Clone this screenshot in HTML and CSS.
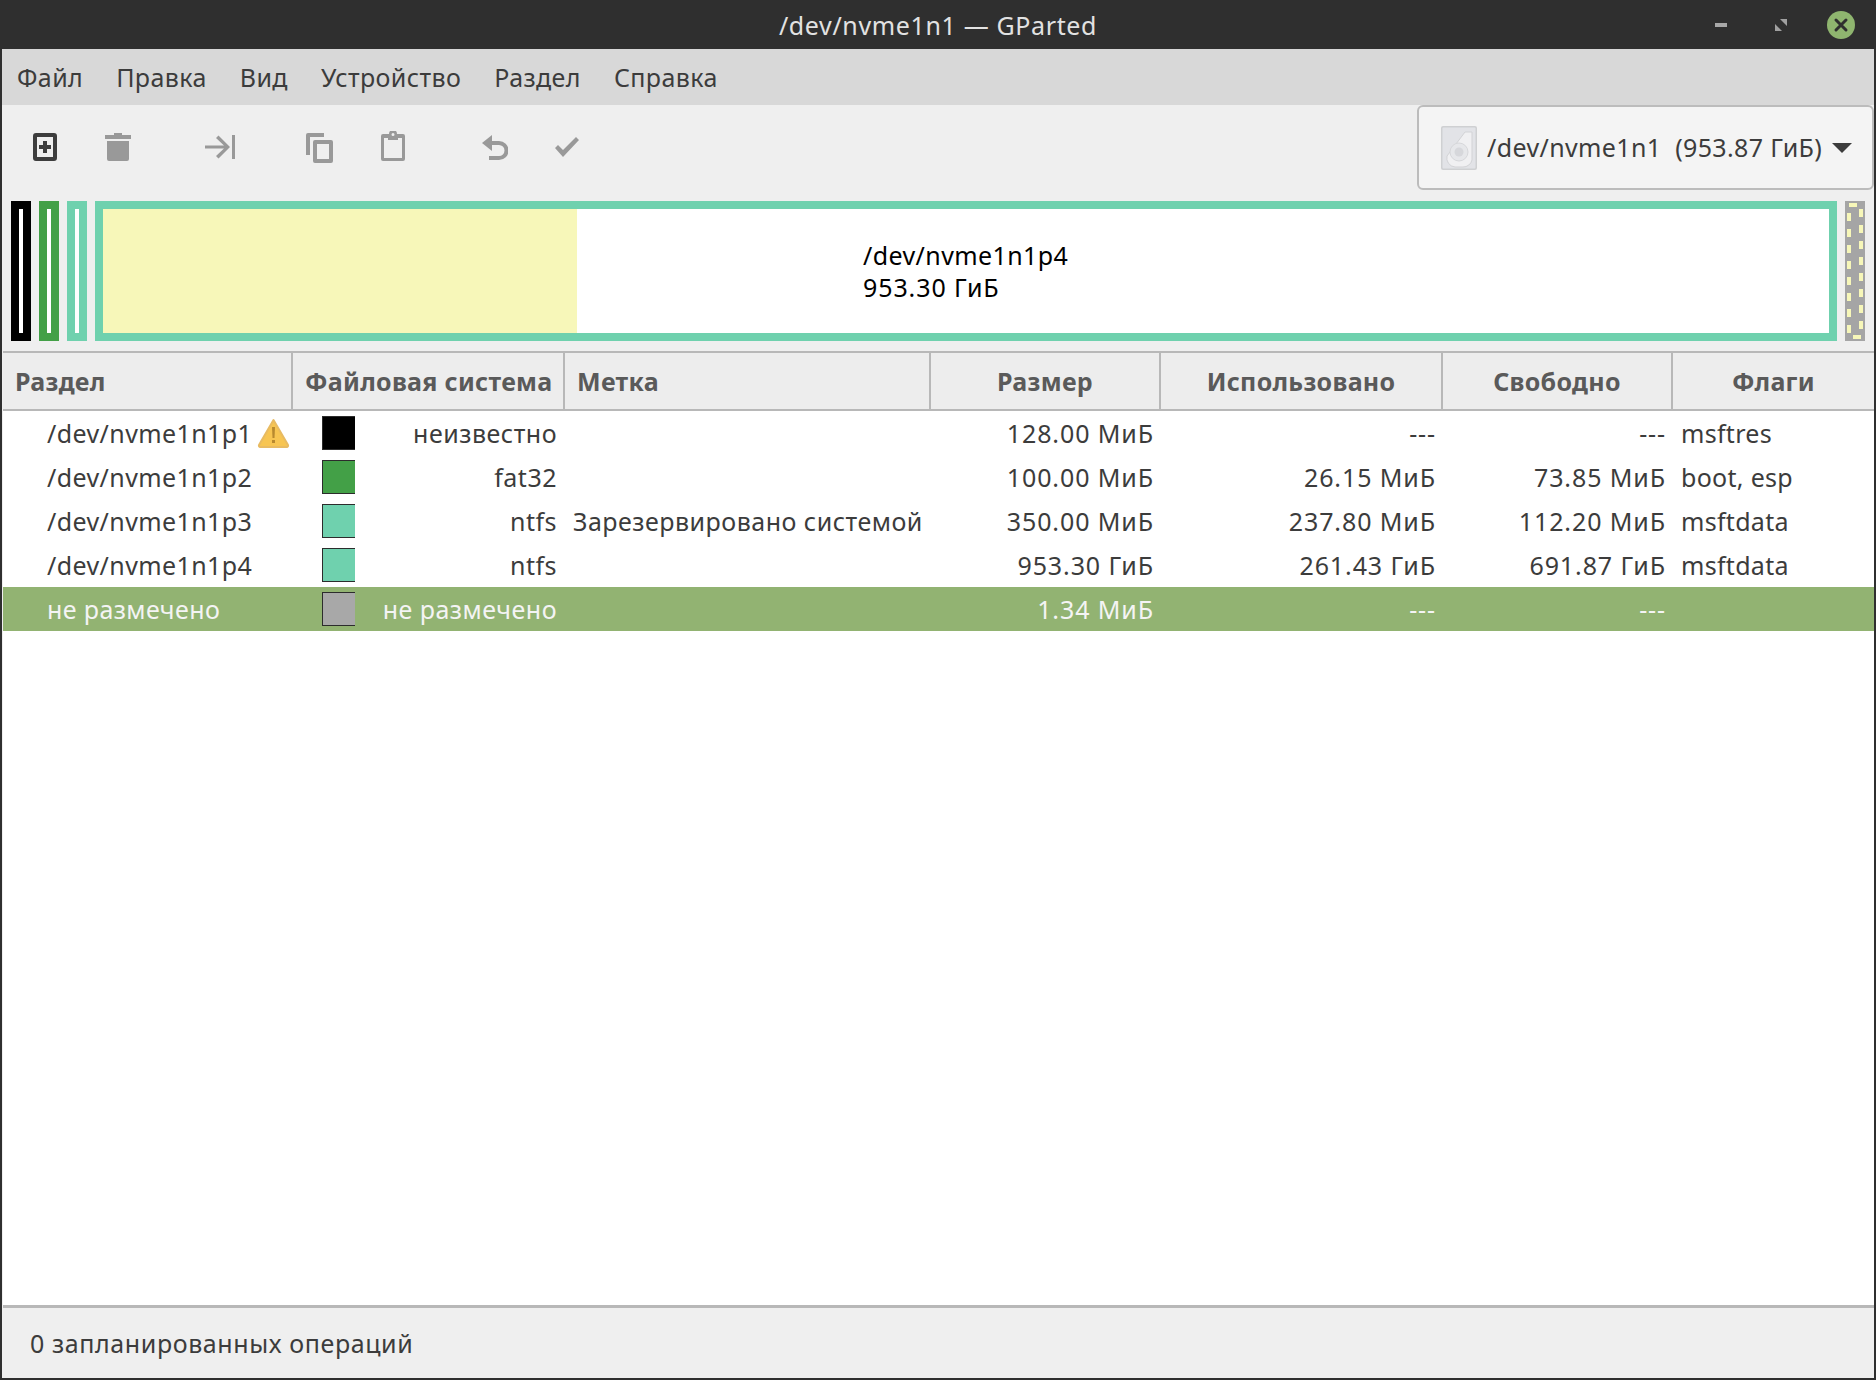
FILE: index.html
```html
<!DOCTYPE html>
<html lang="ru">
<head>
<meta charset="utf-8">
<title>/dev/nvme1n1 — GParted</title>
<link rel="stylesheet" href="styles.css">
</head>
<body>
<div class="window">
  <header class="titlebar">
    <div class="title">/dev/nvme1n1 — GParted</div>
    <div class="wm">
      <svg class="wm-min" width="12" height="4" viewBox="0 0 12 4"><rect width="12" height="4" fill="#a8a8a8"/></svg>
      <svg class="wm-max" width="12" height="12" viewBox="0 0 12 12"><path d="M0 5V12H7ZM5 0H12V7Z" fill="#a0a0a0"/></svg>
      <svg class="wm-close" width="28" height="28" viewBox="0 0 28 28"><circle cx="14" cy="14" r="14" fill="#8fb56f"/><path d="M9 9L19 19M19 9L9 19" stroke="#2f2f2f" stroke-width="3" stroke-linecap="round"/></svg>
    </div>
  </header>
  <nav class="menubar">
    <span>Файл</span><span>Правка</span><span>Вид</span><span>Устройство</span><span>Раздел</span><span>Справка</span>
  </nav>
  <div class="toolbar">
    <div class="tools">
      <svg class="i-new" width="24" height="28" viewBox="0 0 24 28"><path fill-rule="evenodd" d="M3 0H21A3 3 0 0 1 24 3V25A3 3 0 0 1 21 28H3A3 3 0 0 1 0 25V3A3 3 0 0 1 3 0ZM4 4V24H20V4Z" fill="#3d3d3d"/><path d="M10 8H14V12H18V16H14V20H10V16H6V12H10Z" fill="#3d3d3d"/></svg>
      <svg class="i-del" width="26" height="28" viewBox="0 0 26 28"><path d="M9 0H17V2H26V6H0V2H9ZM2 8H24V26A2 2 0 0 1 22 28H4A2 2 0 0 1 2 26Z" fill="#999"/></svg>
      <svg class="i-end" width="30" height="24" viewBox="0 0 30 24"><path d="M0 10.5H19L11 3L13.5 0.5L25 12L13.5 23.500L11 21L19 13.500H0Z" fill="#999"/><rect x="27" width="3" height="24" fill="#999"/></svg>
      <svg class="i-copy" width="27" height="30" viewBox="0 0 27 30"><path fill-rule="evenodd" d="M2 0H18V4H4V22H0V2A2 2 0 0 1 2 0Z" fill="#999"/><path fill-rule="evenodd" d="M9 7H25A2 2 0 0 1 27 9V28A2 2 0 0 1 25 30H9A2 2 0 0 1 7 28V9A2 2 0 0 1 9 7ZM11 11V26H23V11Z" fill="#999"/></svg>
      <svg class="i-paste" width="24" height="30" viewBox="0 0 24 30"><path fill-rule="evenodd" d="M2 3H8A4 4 0 0 1 16 3H22A2 2 0 0 1 24 5V28A2 2 0 0 1 22 30H2A2 2 0 0 1 0 28V5A2 2 0 0 1 2 3ZM10.500 3.500A1.500 1.500 0 0 0 13.500 3.500A1.500 1.500 0 0 0 10.500 3.500ZM3 7V27H21V7H17V9H7V7Z" fill="#999"/></svg>
      <svg class="i-undo" width="26" height="25" viewBox="0 0 26 25"><path d="M10 0V6H17A9 9 0 0 1 17 25H7V21H17A5 5 0 0 0 17 10H10V16L0 8Z" fill="#999"/></svg>
      <svg class="i-check" width="24" height="20" viewBox="0 0 24 20"><path d="M0 11L3 8L8 13L21 0L24 3L8 20Z" fill="#999"/></svg>
    </div>
    <div class="combo">
      <svg class="disk" width="36" height="44" viewBox="0 0 36 44"><rect width="36" height="44" rx="2" fill="#cfd0d2"/><rect x="1.500" y="1.500" width="33" height="41" rx="1" fill="#e2e3e7"/><path d="M6 30L24 6H31V34A9 9 0 0 1 22 41H14A9 9 0 0 1 6 30Z" fill="#f0f0f2" stroke="#d2d3d6"/><circle cx="18" cy="26" r="9" fill="#e6e7ea" stroke="#d6d7da"/><circle cx="18" cy="26" r="4.500" fill="#d6d7db"/></svg>
      <span class="combo-text">/dev/nvme1n1&nbsp; (953.87 ГиБ)</span>
      <svg class="caret" width="20" height="10" viewBox="0 0 20 10"><path d="M0 0H20L10 10Z" fill="#3c3c3c"/></svg>
    </div>
  </div>
  <div class="map">
    <div class="part black"><i></i></div>
    <div class="part green"><i></i></div>
    <div class="part teal"><i></i></div>
    <div class="part main">
      <div class="used"></div>
      <div class="map-label"><div class="ml-name">/dev/nvme1n1p4</div><div class="ml-size">953.30 ГиБ</div></div>
    </div>
    <svg class="part-free" width="20" height="140" viewBox="0 0 20 140"><rect width="20" height="140" fill="#a5a5a5"/><rect x="4" y="4" width="12" height="132" fill="none" stroke="#f7f7b9" stroke-width="4" stroke-dasharray="8 8"/></svg>
  </div>
  <section class="tree">
    <div class="thead">
      <div class="th left">Раздел</div>
      <div class="th left">Файловая система</div>
      <div class="th left">Метка</div>
      <div class="th">Размер</div>
      <div class="th">Использовано</div>
      <div class="th">Свободно</div>
      <div class="th last">Флаги</div>
    </div>
    <div class="row">
      <div class="c-name">/dev/nvme1n1p1<svg class="warn" width="33" height="30" viewBox="0 0 33 30"><path d="M16.500 2L31 27A1.500 1.500 0 0 1 30 29H3A1.500 1.500 0 0 1 2 27Z" fill="#f7c552" stroke="#e8bb62" stroke-width="2" stroke-linejoin="round"/><path d="M15 9H18L17.500 20H15.500Z" fill="#b8892f"/><rect x="15" y="22" width="3" height="3" fill="#b8892f"/></svg></div>
      <div class="c-fs"><i class="sw k"></i><span>неизвестно</span></div>
      <div class="c-label"></div><div class="num">128.00 МиБ</div><div class="num">---</div><div class="num">---</div><div class="c-flags">msftres</div>
    </div>
    <div class="row">
      <div class="c-name">/dev/nvme1n1p2</div>
      <div class="c-fs"><i class="sw g"></i><span>fat32</span></div>
      <div class="c-label"></div><div class="num">100.00 МиБ</div><div class="num">26.15 МиБ</div><div class="num">73.85 МиБ</div><div class="c-flags">boot, esp</div>
    </div>
    <div class="row">
      <div class="c-name">/dev/nvme1n1p3</div>
      <div class="c-fs"><i class="sw t"></i><span>ntfs</span></div>
      <div class="c-label">Зарезервировано системой</div><div class="num">350.00 МиБ</div><div class="num">237.80 МиБ</div><div class="num">112.20 МиБ</div><div class="c-flags">msftdata</div>
    </div>
    <div class="row">
      <div class="c-name">/dev/nvme1n1p4</div>
      <div class="c-fs"><i class="sw t"></i><span>ntfs</span></div>
      <div class="c-label"></div><div class="num">953.30 ГиБ</div><div class="num">261.43 ГиБ</div><div class="num">691.87 ГиБ</div><div class="c-flags">msftdata</div>
    </div>
    <div class="row sel">
      <div class="c-name">не размечено</div>
      <div class="c-fs"><i class="sw u"></i><span>не размечено</span></div>
      <div class="c-label"></div><div class="num">1.34 МиБ</div><div class="num">---</div><div class="num">---</div><div class="c-flags"></div>
    </div>
  </section>
  <footer class="status">0 запланированных операций</footer>
</div>
</body>
</html>
```
FILE: styles.css
```css
* { box-sizing: border-box; }
html, body { margin: 0; height: 100%; }
body { background: #2f2f2f; font-family: "Noto Sans", "Liberation Sans", sans-serif; font-size: 25px; letter-spacing: 0.5px; color: #3c3c3c; }
.window { width: 1876px; height: 1380px; display: flex; flex-direction: column; background: #efefef; overflow: hidden; border-left: 2px solid #2f2f2f; border-right: 2px solid #2f2f2f; border-bottom: 2px solid #2f2f2f; }

.titlebar { height: 49px; flex: none; background: #2f2f2f; display: flex; align-items: center; justify-content: center; position: relative; color: #e2e2e2; letter-spacing: 0.64px; }
.wm { position: absolute; top: 0; left: 1711px; width: 144px; height: 49px; }
.wm-min { position: absolute; left: 2px; top: 23px; }
.wm-max { position: absolute; left: 62px; top: 19px; }
.wm-close { position: absolute; left: 114px; top: 11px; }

.menubar { height: 56px; flex: none; background: #d8d8d8; display: flex; align-items: center; gap: 33px; padding: 0 0 0 15px; letter-spacing: 0.4px; }

.toolbar { height: 96px; flex: none; display: flex; justify-content: space-between; }
.tools { display: flex; align-items: flex-start; padding: 28px 0 0 31px; }
.i-del { margin-left: 48px; }
.i-end { margin: 2px 0 0 74px; }
.i-copy { margin-left: 71px; }
.i-paste { margin: -2px 0 0 48px; }
.i-undo { margin: 2px 0 0 77px; }
.i-check { margin: 4px 0 0 47px; }
.combo { width: 457px; height: 85px; background: #f4f4f4; border: 2px solid #bcbcbc; border-radius: 6px; display: flex; align-items: center; padding: 0 20px 0 22px; }
.disk { flex: none; }
.combo-text { margin-left: 10px; flex: 1; white-space: nowrap; letter-spacing: 0.37px; padding-bottom: 2px; }
.caret { flex: none; }

.map { height: 140px; flex: none; display: flex; gap: 8px; padding-left: 9px; }
.part { width: 20px; border: 8px solid; display: flex; }
.part i { flex: 1; background: #fff; }
.black { border-color: #000; }
.green { border-color: #43a047; }
.teal { border-color: #6fd1ae; }
.main { flex: 1; min-width: 0; border-color: #6fd1ae; background: #fff; position: relative; }
.used { width: 474px; background: #f7f7b9; }
.map-label { position: absolute; left: 760px; top: 30px; color: #000; line-height: 32px; }
.ml-name { letter-spacing: 0.4px; }
.ml-size { letter-spacing: 0.9px; }
.part-free { flex: none; margin-right: 9px; }

.tree { flex: 1; min-height: 0; margin: 10px 0 0 1px; background: #fff; border-top: 2px solid #b8b8b8; border-bottom: 3px solid #b8b8b8; }
.thead, .row { display: grid; grid-template-columns: 290px 272px 366px 230px 282px 230px 1fr; }
.thead { height: 58px; background: #ededed; border-bottom: 2px solid #b8b8b8; }
.th { font-weight: 700; color: #5a5a5a; display: flex; align-items: center; justify-content: center; border-right: 2px solid #b8b8b8; white-space: nowrap; letter-spacing: 0.3px; }
.th.left { justify-content: flex-start; padding-left: 12px; }
.th.last { border-right: 0; }
.row { height: 44px; align-items: center; white-space: nowrap; }
.c-name { padding-left: 44px; display: flex; align-items: center; letter-spacing: 0.4px; }
.warn { margin-left: 5px; }
.c-fs { display: flex; align-items: center; justify-content: space-between; padding: 0 8px 0 29px; height: 44px; }
.sw { flex: none; width: 33px; height: 34px; border: 1px solid #2c2c2c; border-right: 0; }
.sw.k { background: #000; }
.sw.g { background: #43a047; }
.sw.t { background: #6fd1ae; }
.sw.u { background: #a8a8a8; }
.c-label { padding-left: 8px; }
.num { text-align: right; padding-right: 7px; letter-spacing: 0.9px; }
.c-flags { padding-left: 8px; letter-spacing: 0.3px; }
.sel { background: #92b372; color: #f4f4f4; }

.status { height: 70px; flex: none; display: flex; align-items: center; padding-left: 28px; letter-spacing: 0.6px; }
```
